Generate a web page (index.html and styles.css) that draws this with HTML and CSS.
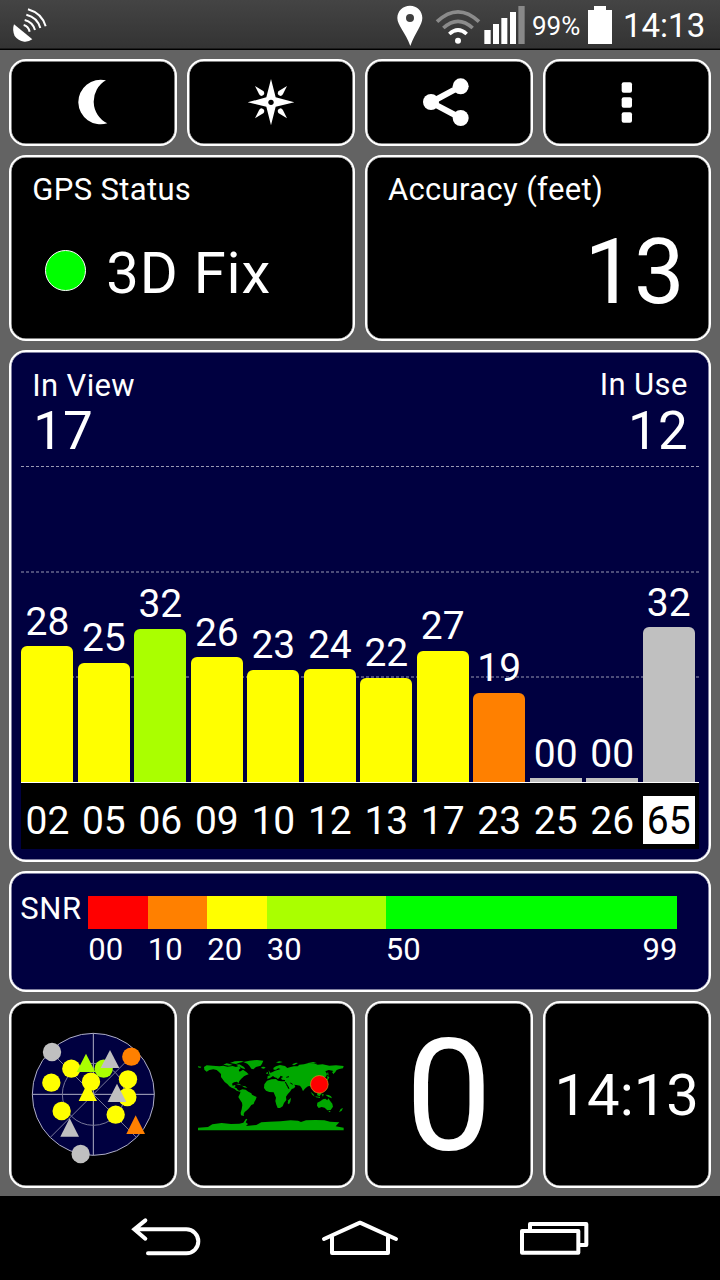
FILE: index.html
```html
<!DOCTYPE html>
<html lang="en">
<head>
    <meta charset="UTF-8">
    <meta name="viewport" content="width=device-width, initial-scale=1.0">
    <title>GPS Status</title>
    <link rel="stylesheet" href="styles.css">
</head>
<body>
    <header class="status-bar">
        <svg class="icon-satellite" width="36" height="48" viewBox="36 0 108 144">
            <path d="M42 73 L97 118 Q86 126 73 125 Q54 122 44 108 Q36 90 42 73Z" fill="#fff"/>
            <g fill="none" stroke="#fff" stroke-width="6">
                <path d="M71 75 Q85 79 89 95"/>
                <path d="M74 60 Q98 66 105 90"/>
                <path d="M79 44 Q112 52 121 84"/>
                <path d="M84 28 Q126 40 137 79"/>
            </g>
        </svg>
        <div class="status-right">
            <svg width="26" height="48" viewBox="110 0 78 144">
                <path fill="#fff" fill-rule="evenodd" d="M149 17 C170 17 186 33 186 54 C186 76 164 98 150 138 C136 98 111 76 111 54 C111 33 128 17 149 17Z M149 42 A12 12 0 1 0 149 66 A12 12 0 1 0 149 42Z"/>
            </svg>
            <svg class="icon-wifi" width="46" height="48" viewBox="225 0 138 144">
                <g fill="none" stroke-width="11">
                    <path d="M231 65 Q294 6 357 65" stroke="#8b8b8b"/>
                    <path d="M250 84 Q294 44 338 84" stroke="#8b8b8b"/>
                    <path d="M268 102 Q294 78 320 102" stroke="#fff"/>
                </g>
                <circle cx="294" cy="122" r="9" fill="#fff"/>
            </svg>
            <svg class="icon-signal" width="41" height="48" viewBox="372 0 123 144">
                <path fill="#fff" d="M373 90h19v42h-19zM399 72h18v60h-18zM424 54h18v78h-18zM450 36h18v96h-18z"/>
                <path fill="#898989" d="M475 18h19v114h-19z"/>
            </svg>
            <span class="battery-text">99%</span>
            <svg class="icon-battery" width="24" height="48" viewBox="684 0 72 144">
                <path fill="#fff" d="M702 18h36v12h18v102h-72V30h18z"/>
            </svg>
            <span class="clock">14:13</span>
        </div>
    </header>

    <main class="dashboard">
        <button class="tile tool">
            <svg width="48" height="48" viewBox="206 235 144 144">
                <path fill="#fff" d="M317 242 A67 67 0 1 0 321 371 A73 73 0 0 1 317 242Z"/>
            </svg>
        </button>
        <button class="tile tool">
            <svg width="48" height="48" viewBox="741 235 144 144">
                <g fill="#fff">
                    <path d="M813 238 L827 293 L883 308 L827 321 L813 377 L799 321 L743 308 L799 293Z"/>
                    <path d="M765 259 L791 275 Q797 286 784 289 Q779 288 777 283Z"/>
                    <path d="M861 259 L835 275 Q829 286 842 289 Q847 288 849 283Z"/>
                    <path d="M765 356 L791 340 Q797 329 784 326 Q779 327 777 332Z"/>
                    <path d="M861 356 L835 340 Q829 329 842 326 Q847 327 849 332Z"/>
                </g>
                <circle cx="813" cy="308" r="8"/>
            </svg>
        </button>
        <button class="tile tool">
            <svg width="54" height="48" viewBox="185 235 162 144">
                <path d="M301 260 L212 308 L301 355" fill="none" stroke="#fff" stroke-width="18"/>
                <g fill="#fff">
                    <circle cx="301" cy="260" r="24"/>
                    <circle cx="212" cy="307" r="24"/>
                    <circle cx="301" cy="355" r="24"/>
                </g>
            </svg>
        </button>
        <button class="tile tool">
            <svg width="48" height="48" viewBox="728 235 144 144">
                <g fill="#fff">
                    <rect x="784" y="248" width="31" height="31" rx="6"/>
                    <rect x="784" y="293" width="31" height="31" rx="6"/>
                    <rect x="784" y="338" width="31" height="31" rx="6"/>
                </g>
            </svg>
        </button>

        <section class="tile half">
            <h2>GPS Status</h2>
            <div class="fix"><span class="dot"></span>3D Fix</div>
        </section>
        <section class="tile half">
            <h2>Accuracy (feet)</h2>
            <div class="accuracy">13</div>
        </section>

        <section class="tile full chart">
            <div class="chart-head">
                <div>
                    <h2>In View</h2>
                    <div class="count">17</div>
                </div>
                <div class="in-use">
                    <h2>In Use</h2>
                    <div class="count">12</div>
                </div>
            </div>
            <div class="plot">
                <div class="col"><span>28</span><div class="bar yellow" style="height:136px"></div></div>
                <div class="col"><span>25</span><div class="bar yellow" style="height:119.5px"></div></div>
                <div class="col"><span>32</span><div class="bar lime" style="height:153.5px"></div></div>
                <div class="col"><span>26</span><div class="bar yellow" style="height:125px"></div></div>
                <div class="col"><span>23</span><div class="bar yellow" style="height:112.5px"></div></div>
                <div class="col"><span>24</span><div class="bar yellow" style="height:113px"></div></div>
                <div class="col"><span>22</span><div class="bar yellow" style="height:104.5px"></div></div>
                <div class="col"><span>27</span><div class="bar yellow" style="height:131.5px"></div></div>
                <div class="col"><span>19</span><div class="bar orange" style="height:89.5px"></div></div>
                <div class="col"><span>00</span><div class="bar gray empty" style="height:4px"></div></div>
                <div class="col"><span>00</span><div class="bar gray empty" style="height:4px"></div></div>
                <div class="col"><span>32</span><div class="bar gray" style="height:155px"></div></div>
            </div>
            <div class="ids">
                <span>02</span><span>05</span><span>06</span><span>09</span><span>10</span><span>12</span>
                <span>13</span><span>17</span><span>23</span><span>25</span><span>26</span><span class="selected">65</span>
            </div>
        </section>

        <section class="tile full snr">
            <div class="snr-label">SNR</div>
            <div class="scale">
                <div class="seg s10 red"></div>
                <div class="seg s10 orange"></div>
                <div class="seg s10 yellow"></div>
                <div class="seg s20 lime"></div>
                <div class="seg s49 green"></div>
            </div>
            <div class="scale-text">
                <span class="s10">00</span>
                <span class="s10">10</span>
                <span class="s10">20</span>
                <span class="s20">30</span>
                <span class="s49 ends"><span>50</span><span>99</span></span>
            </div>
        </section>

        <section class="tile small">
            <svg width="126.67" height="140" viewBox="90 72 380 420">
                <circle cx="280" cy="280" r="183" fill="#000040"/>
                <g fill="none" stroke="#b0b0c6" stroke-width="3">
                    <circle cx="280" cy="280" r="183"/>
                    <path d="M97 280H463M280 97V463"/>
                    <g stroke="#777799">
                        <circle cx="280" cy="280" r="93"/>
                        <path d="M151 151L409 409M409 151L151 409"/>
                    </g>
                </g>
                <g fill="#c0c0c0">
                    <circle cx="156" cy="153" r="27.5"/>
                    <circle cx="242" cy="459" r="27.5"/>
                </g>
                <g fill="#ffff00">
                    <circle cx="214" cy="203" r="27.5"/>
                    <circle cx="154" cy="245" r="27.5"/>
                    <circle cx="273" cy="242" r="27.5"/>
                    <circle cx="384" cy="235" r="27.5"/>
                    <circle cx="382" cy="288" r="27.5"/>
                    <circle cx="185" cy="330" r="27.5"/>
                    <circle cx="347" cy="341" r="27.5"/>
                    <path d="M263 245L291 300H236Z"/>
                </g>
                <g fill="#aaff00">
                    <circle cx="311" cy="203" r="27.5"/>
                    <path d="M258 158L286 213H230Z"/>
                </g>
                <g fill="#ff8000">
                    <circle cx="394" cy="167" r="27.5"/>
                    <path d="M407 343L435 399H379Z"/>
                </g>
                <g fill="#c0c0c0">
                    <path d="M330 147L358 201H302Z"/>
                    <path d="M351 248L379 303H323Z"/>
                    <path d="M209 352L237 407H181Z"/>
                </g>
            </svg>
        </section>
        <section class="tile small">
            <svg width="145.67" height="72" viewBox="36 56 437 216">
                <g fill="#00a800">
                    <!-- North America -->
                    <path d="M54 80L62 75 80 76 100 78 112 76 124 79 140 77 150 80 158 77 164 84 158 89 161 94 171 88 181 95 188 102 180 105 174 108 166 115 160 122 158 128 152 124 144 126 138 130 140 136 147 134 149 137 145 141 152 144 156 150 164 152 161 154 152 151 145 145 137 142 130 138 124 131 116 125 110 117 105 110 105 101 99 95 92 89 82 87 70 89 62 94 55 88Z"/>
                    <path d="M112 73L122 69 132 71 140 74 128 76ZM132 68L146 63 166 62 174 64 160 67 150 71ZM150 73L160 72 174 80 178 87 168 84 158 78ZM150 131L158 130 167 135 160 134ZM168 136L178 138 184 143 174 141ZM36 78L46 79 43 83 36 81Z"/>
                    <!-- Greenland -->
                    <path d="M172 65L190 61 213 59 232 61 228 70 224 76 210 80 202 87 196 85 190 76 184 70Z"/>
                    <path d="M226 80L234 79 239 82 233 85 227 84Z"/>
                    <!-- South America -->
                    <path d="M162 150L169 147 179 148 187 154 196 159 198 163 212 170 209 178 205 185 203 191 196 194 190 202 186 207 181 211 176 215 173 221 174 227 165 225 164 217 167 207 169 195 168 187 161 177 157 170 160 164 163 157Z"/>
                    <!-- Africa -->
                    <path d="M243 121L256 117 270 116 276 121 286 123 297 123 301 134 307 145 317 146 313 153 305 162 300 169 301 179 294 188 290 198 282 203 275 203 271 193 268 182 270 172 266 163 263 156 250 155 240 151 234 143 235 132Z"/>
                    <path d="M315 172L313 184 309 192 305 189 307 180Z"/>
                    <!-- Eurasia -->
                    <path d="M244 116L245 107 253 105 251 99 260 95 267 91 275 89 284 86 277 84 270 88 263 88 262 83 270 78 282 74 297 77 304 83 314 80 324 78 335 78 340 73 354 72 368 68 384 69 395 73 410 72 430 76 450 75 473 77 471 84 460 86 452 89 446 98 440 91 428 89 418 93 423 101 420 109 413 112 414 119 410 122 406 114 401 116 406 124 400 132 392 140 386 139 386 147 391 152 387 158 381 150 377 142 371 137 366 138 359 143 354 148 351 153 347 143 342 136 331 134 324 133 328 137 325 143 312 148 306 141 297 127 297 119 288 118 285 113 292 110 284 106 279 114 275 116 267 107 272 113 266 111 261 107 252 113Z"/>
                    <path d="M247 90L251 94 256 101 247 103 250 98ZM241 97L246 95 246 100 241 101ZM270 66L280 63 290 65 278 68ZM318 72L330 67 336 68 324 75ZM366 67L382 65 394 69ZM424 106L430 111 426 118 418 123 416 120 424 115ZM426 94L428 106 423 102ZM438 95L448 90 443 102Z"/>
                    <!-- Indonesia and Oceania -->
                    <path d="M374 154L382 161 386 169 379 163ZM388 168L402 170 402 173 390 171ZM393 160L400 154 407 159 401 168 394 165ZM407 162L413 161 411 169ZM408 146L413 154 408 150ZM418 163L428 164 435 168 438 174 427 170Z"/>
                    <path d="M394 187L404 182 411 177 418 175 424 180 427 174 432 181 439 190 441 199 434 209 424 210 416 202 407 200 398 203 393 196Z"/>
                    <path d="M464 206L471 203 467 211 459 216ZM427 212L434 212 431 216Z"/>
                    <!-- Antarctica -->
                    <path d="M36 262L66 260 79 252 107 248 135 251 160 250 172 247 180 235 184 237 179 246 186 251 180 257 211 254 226 246 250 244 284 243 314 240 336 241 345 245 360 240 388 239 415 240 432 244 460 246 449 258 473 262V270H36Z"/>
                </g>
                <path stroke="#000" stroke-width="3" fill="none" d="M298 125L309 144M313 128L320 132M301 111L309 109"/>
                <circle cx="400" cy="132" r="26.5" fill="#ff0000" stroke="#d89a20" stroke-width="2"/>
            </svg>
        </section>
        <section class="tile small speed">0</section>
        <section class="tile small time">14:13</section>
    </main>

    <nav class="nav-bar">
        <svg width="80" height="84" viewBox="77 18 240 252">
            <path d="M135 91L102 118L135 146M102 118H258A36 36 0 0 1 258 190H143" fill="none" stroke="#fff" stroke-width="12" stroke-linecap="round"/>
        </svg>
        <svg width="80" height="84" viewBox="660 18 240 252">
            <path d="M672 147L780 98L888 147M696 142V189H864V142" fill="none" stroke="#fff" stroke-width="12" stroke-linecap="round" stroke-linejoin="round"/>
        </svg>
        <svg width="80" height="84" viewBox="1243 18 240 252">
            <path d="M1267 123H1436V188H1267ZM1291 119V102H1460V165H1440" fill="none" stroke="#fff" stroke-width="12" stroke-linejoin="round"/>
        </svg>
    </nav>
</body>
</html>
```
FILE: styles.css
```css
* {
    box-sizing: border-box;
}
body {
    margin: 0;
    width: 720px;
    height: 1280px;
    overflow: hidden;
    background: #636363;
    color: #fff;
    font-family: Roboto, sans-serif;
}
svg {
    display: block;
    flex: none;
}
h2 {
    margin: 0;
    font-size: 31px;
    font-weight: normal;
    line-height: 36px;
    letter-spacing: 0.35px;
}
.status-bar {
    display: flex;
    justify-content: space-between;
    height: 50px;
    padding: 0 14px 0 12px;
    background: linear-gradient(#444, #333);
    border-bottom: 1px solid #000;
    box-shadow: inset 0 -1px #1c1c1c;
}
.status-right {
    display: flex;
    line-height: 52px;
}
.icon-wifi {
    margin-left: 12px;
}
.icon-signal {
    margin-left: 3px;
}
.battery-text {
    width: 63px;
    padding-left: 7px;
    font-size: 26px;
}
.clock {
    width: 94px;
    padding-left: 11px;
    font-size: 33px;
}
.dashboard {
    display: grid;
    grid-template-columns: repeat(4, 168px);
    grid-template-rows: 86.6px 186px 511.6px 121.3px 186.5px;
    gap: 9.2px 9.8px;
    height: 1146px;
    padding: 9.2px 9.3px;
}
.tile {
    background: #000;
    border: 2px solid #fff;
    border-radius: 17px;
    box-shadow: inset 0 0 0 0.5px #fff;
    color: #fff;
}
.tool,
.small {
    display: flex;
    align-items: center;
    justify-content: center;
    padding: 0;
}
.half {
    grid-column: span 2;
    padding: 15px 21px;
}
.full {
    grid-column: span 4;
    background: #000040;
}
.fix {
    display: flex;
    align-items: center;
    margin-top: 30px;
    padding-left: 13px;
    font-size: 58px;
    line-height: 70px;
    letter-spacing: 0.8px;
}
.dot {
    width: 41px;
    height: 41px;
    margin: 0 20px 4px 0;
    background: #00ff00;
    border: 1px solid #fff;
    border-radius: 50%;
}
.accuracy {
    margin-top: 15px;
    padding-right: 4px;
    font-size: 90px;
    line-height: 100px;
    text-align: right;
    letter-spacing: -1px;
}

/* satellite chart */
.chart {
    padding: 0 9px 0 10px;
}
.chart-head {
    display: flex;
    justify-content: space-between;
    height: 114px;
    padding: 16px 12px 0 11px;
}
.count {
    padding-left: 1px;
    font-size: 53px;
    line-height: 54px;
}
.in-use {
    text-align: right;
}
.in-use h2 {
    margin-top: -1px;
    margin-bottom: 1px;
}
.plot,
.ids {
    display: grid;
    grid-template-columns: repeat(12, 52.2px);
    column-gap: 4.3px;
    width: 678px;
    font-size: 39px;
    text-align: center;
}
.plot {
    height: 317px;
    border-bottom: 1px solid #fff;
    background:
        repeating-linear-gradient(90deg, #9999b3 0 3px, transparent 3px 5px) 0 0 / 100% 1px no-repeat,
        repeating-linear-gradient(90deg, #4c4c79 0 3px, transparent 3px 5px) 0 105px / 100% 2px no-repeat,
        repeating-linear-gradient(90deg, #4c4c79 0 3px, transparent 3px 5px) 0 210px / 100% 2px no-repeat;
}
.col {
    display: flex;
    flex-direction: column;
    justify-content: flex-end;
    line-height: 40px;
}
.bar {
    margin-top: 4.6px;
    border-radius: 6px 6px 0 0;
}
.empty {
    border-radius: 0;
}
.ids {
    height: 66px;
    padding-top: 13px;
    background: #000;
    line-height: 50px;
}
.ids span {
    height: 47.5px;
}
.ids .selected {
    background: #fff;
    color: #000;
}

/* SNR legend */
.snr {
    display: grid;
    grid-template-columns: 68px 589px;
    grid-template-rows: 32.6px auto;
    padding: 23px 0 0 9px;
    font-size: 31px;
}
.snr-label {
    line-height: 26px;
    letter-spacing: 0.6px;
}
.scale,
.scale-text {
    display: flex;
}
.scale-text {
    grid-column: 2;
    line-height: 42px;
}
.s10 {
    flex: 10 0 0;
}
.s20 {
    flex: 20 0 0;
}
.s49 {
    flex: 49 0 0;
}
.ends {
    display: flex;
    justify-content: space-between;
}
.red { background: #ff0000; }
.orange { background: #ff8000; }
.yellow { background: #ffff00; }
.lime { background: #aaff00; }
.green { background: #00ff00; }
.gray { background: #c0c0c0; }

.speed {
    padding-top: 4px;
    font-size: 155px;
    line-height: 1;
}
.time {
    font-size: 58px;
}
.nav-bar {
    display: flex;
    justify-content: center;
    gap: 114.3px;
    height: 84px;
    background: #000;
}
```
